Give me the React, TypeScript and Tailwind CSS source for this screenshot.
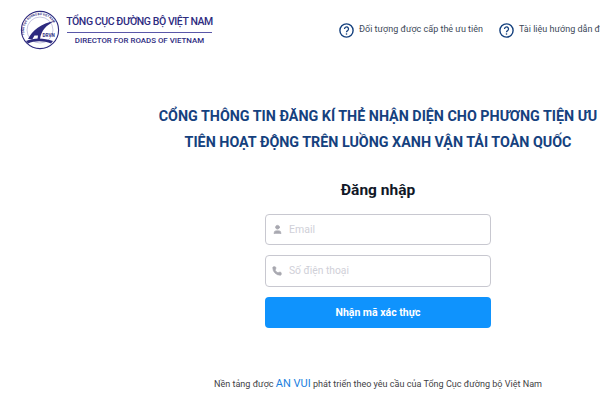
import { User, Phone } from "lucide-react";

function Logo() {
  return (
    <svg width="40" height="40" viewBox="0 0 40 40" className="shrink-0">
      <defs>
        <path id="ring" d="M4.5 25a16 16 0 1 1 31 0" fill="none" />
      </defs>
      <circle cx="20" cy="20" r="18.6" fill="#fff" stroke="#2e2b7f" strokeWidth="1.1" />
      <circle cx="20" cy="20" r="13" fill="#fff" stroke="#8f8dc4" strokeWidth="0.5" />
      <text fontSize="3" fill="#2e2b7f" fontWeight="700" fontFamily="Roboto, sans-serif">
        <textPath href="#ring">TỔNG CỤC ĐƯỜNG BỘ VIỆT NAM</textPath>
      </text>
      <path d="M8 29 C12 21 21 13 35 11 C26 15 21 21 20 29 L17.5 29 L18 25.5 L14.5 25.5 L12.5 29 Z" fill="#2e2b7f" />
      <path d="M6 31 C13 27.5 24 27.5 33 31 L31 33.5 C24 30.5 14 30.5 8 33.5 Z" fill="#2e2b7f" />
      <text x="22.5" y="26.5" fontSize="4.6" fontWeight="700" fill="#2e2b7f" fontFamily="Roboto, sans-serif">DRVN</text>
    </svg>
  );
}

function HelpIcon() {
  return (
    <svg width="15" height="15" viewBox="0 0 15 15" className="shrink-0">
      <circle cx="7.5" cy="7.5" r="6.6" fill="none" stroke="#15417e" strokeWidth="1.4" />
      <path d="M5.5 5.9a2 2 0 1 1 3.1 1.7c-.7.4-1.1.8-1.1 1.6" fill="none" stroke="#15417e" strokeWidth="1.3" />
      <circle cx="7.5" cy="11" r="0.8" fill="#15417e" />
    </svg>
  );
}

export default function App() {
  return (
    <div className="w-[600px] h-[401px] overflow-hidden bg-white font-['Roboto',sans-serif]">
      <header className="flex items-center h-[60px] pl-5">
        <Logo />
        <div className="ml-[7px] flex flex-col items-center w-[145px] shrink-0 text-[#2e2b7f]">
          <span className="text-[10.5px] leading-[16px] font-medium whitespace-nowrap tracking-[-0.42px]">TỔNG CỤC ĐƯỜNG BỘ VIỆT NAM</span>
          <div className="w-full h-px bg-[#5a57a8] mt-[2px] mb-[2px]" />
          <span className="text-[7.9px] leading-[12px] font-medium whitespace-nowrap">DIRECTOR FOR ROADS OF VIETNAM</span>
        </div>
        <nav className="ml-[127px] flex items-center text-[9px] text-[#3c4858] whitespace-nowrap">
          <HelpIcon />
          <span className="ml-[5px]">Đối tượng được cấp thẻ ưu tiên</span>
          <div className="ml-[16px]"><HelpIcon /></div>
          <span className="ml-[5px]">Tài liệu hướng dẫn đăng kí</span>
        </nav>
      </header>

      <main className="ml-[156px] w-[444px] flex flex-col items-center">
        <h1 className="mt-[43px] text-center text-[14.3px] leading-[26px] font-bold text-[#15417e] whitespace-nowrap">
          CỔNG THÔNG TIN ĐĂNG KÍ THẺ NHẬN DIỆN CHO PHƯƠNG TIỆN ƯU
          <br />
          TIÊN HOẠT ĐỘNG TRÊN LUỒNG XANH VẬN TẢI TOÀN QUỐC
        </h1>

        <h2 className="mt-[23px] text-[15.5px] leading-[24px] font-bold text-[#111827]">Đăng nhập</h2>

        <form className="mt-[12px] w-[226px] flex flex-col">
          <div className="h-[31px] flex items-center border border-[#c8c8d0] rounded-[4px] pl-[6px]">
            <User className="w-[11px] h-[11px] text-[#a8a8b0]" fill="#a8a8b0" />
            <input placeholder="Email" className="ml-[6px] flex-1 min-w-0 text-[10.5px] outline-none placeholder:text-[#d0d0d8]" />
          </div>
          <div className="mt-[10px] h-[32px] flex items-center border border-[#c8c8d0] rounded-[4px] pl-[6px]">
            <Phone className="w-[10px] h-[10px] text-[#a8a8b0]" fill="#a8a8b0" />
            <input placeholder="Số điện thoại" className="ml-[7px] flex-1 min-w-0 text-[10.3px] outline-none placeholder:text-[#d0d0d8]" />
          </div>
          <button type="button" className="mt-[10px] h-[31px] rounded-[4px] bg-[#0f93fd] text-white text-[10.5px] font-bold">
            Nhận mã xác thực
          </button>
        </form>

        <p className="mt-[48px] text-[9.05px] leading-[16px] text-[#3f3f46] whitespace-nowrap">
          Nền tảng được <span className="text-[11px] text-[#1a7fe0]">AN VUI</span> phát triển theo yêu cầu của Tổng Cục đường bộ Việt Nam
        </p>
      </main>
    </div>
  );
}
